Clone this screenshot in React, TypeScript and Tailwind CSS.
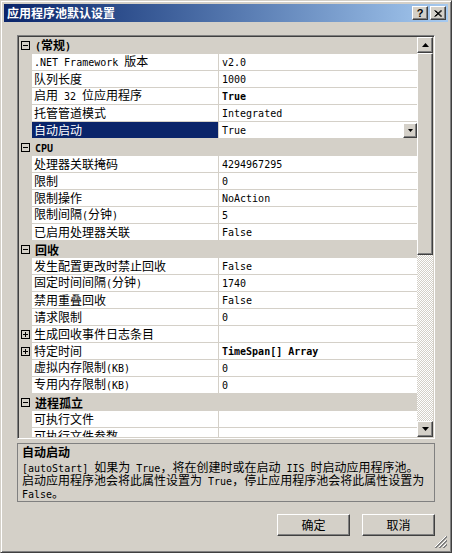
import React from 'react'

// ── data ────────────────────────────────────────────────────────────────────
type Prop = { name: string; value?: string; bold?: boolean; plus?: boolean; sel?: boolean }
type Cat = { cat: string; props: Prop[] }

const grid: Cat[] = [
  {
    cat: '(常规)',
    props: [
      { name: '.NET Framework 版本', value: 'v2.0' },
      { name: '队列长度', value: '1000' },
      { name: '启用 32 位应用程序', value: 'True', bold: true },
      { name: '托管管道模式', value: 'Integrated' },
      { name: '自动启动', value: 'True', sel: true },
    ],
  },
  {
    cat: 'CPU',
    props: [
      { name: '处理器关联掩码', value: '4294967295' },
      { name: '限制', value: '0' },
      { name: '限制操作', value: 'NoAction' },
      { name: '限制间隔(分钟)', value: '5' },
      { name: '已启用处理器关联', value: 'False' },
    ],
  },
  {
    cat: '回收',
    props: [
      { name: '发生配置更改时禁止回收', value: 'False' },
      { name: '固定时间间隔(分钟)', value: '1740' },
      { name: '禁用重叠回收', value: 'False' },
      { name: '请求限制', value: '0' },
      { name: '生成回收事件日志条目', plus: true },
      { name: '特定时间', value: 'TimeSpan[] Array', bold: true, plus: true },
      { name: '虚拟内存限制(KB)', value: '0' },
      { name: '专用内存限制(KB)', value: '0' },
    ],
  },
  {
    cat: '进程孤立',
    props: [{ name: '可执行文件' }, { name: '可执行文件参数' }],
  },
]

const raised =
  'border border-t-white border-l-white border-r-[#404040] border-b-[#404040] shadow-[inset_-1px_-1px_0_#808080] bg-[#d4d0c8]'

// latin runs get a narrow mono face, like SimSun's half-width glyphs
function Txt({ s }: { s: string }) {
  return (
    <>
      {s.split(/([\x20-\x7e]+)/).map((p, i) =>
        i % 2 === 1 ? (
          <span key={i} className="font-['DejaVu_Sans_Mono',monospace] text-[10px]">
            {p}
          </span>
        ) : (
          p
        )
      )}
    </>
  )
}

function Box({ plus }: { plus?: boolean }) {
  return (
    <svg width="9" height="9" viewBox="0 0 9 9" className="block">
      <rect x="0.5" y="0.5" width="8" height="8" fill="none" stroke="#000" />
      <path d="M2 4.5h5" stroke="#000" />
      {plus && <path d="M4.5 2v5" stroke="#000" />}
    </svg>
  )
}

function Arrow({ up, w = 7 }: { up?: boolean; w?: number }) {
  const h = Math.ceil(w / 2)
  return (
    <svg width={w} height={h} viewBox={`0 0 ${w} ${h}`} className="block">
      <path d={up ? `M0 ${h}L${w / 2} 0L${w} ${h}Z` : `M0 0L${w} 0L${w / 2} ${h}Z`} fill="#000" />
    </svg>
  )
}

// ── rows ────────────────────────────────────────────────────────────────────
function CatRow({ name }: { name: string }) {
  return (
    <div className="flex h-[17px] shrink-0 items-center bg-[#d4d0c8]">
      <div className="flex w-[13px] shrink-0 justify-center">
        <Box />
      </div>
      <span className="pl-[3px] font-bold leading-[16px] whitespace-nowrap">
        <Txt s={name} />
      </span>
    </div>
  )
}

function PropRow({ p }: { p: Prop }) {
  return (
    <div className="flex h-[17px] shrink-0">
      <div className="flex w-[13px] shrink-0 items-center justify-center bg-[#d4d0c8] pb-px">
        {p.plus && <Box plus />}
      </div>
      <div
        className={`flex w-[186px] shrink-0 items-center border-b border-[#d4d0c8] pl-[2px] whitespace-nowrap ${
          p.sel ? 'bg-[#0a246a] text-white' : 'bg-white'
        }`}
      >
        <span className="leading-[16px]">
          <Txt s={p.name} />
        </span>
      </div>
      <div className="w-px shrink-0 bg-[#d4d0c8]" />
      <div className="flex flex-1 items-center justify-between border-b border-[#d4d0c8] bg-white pl-[3px] whitespace-nowrap">
        <span className={`leading-[16px] ${p.bold ? 'font-bold' : ''}`}>
          {p.value && <Txt s={p.value} />}
        </span>
        {p.sel && (
          <div className={`flex h-[15px] w-[14px] items-center justify-center ${raised}`}>
            <Arrow w={5} />
          </div>
        )}
      </div>
    </div>
  )
}

function ScrollBar() {
  return (
    <div className="flex w-[16px] shrink-0 flex-col">
      <div className={`flex h-[16px] items-center justify-center ${raised}`}>
        <Arrow up />
      </div>
      <div className={`h-[202px] ${raised}`} />
      <div className="flex-1 bg-[image:repeating-conic-gradient(#d4d0c8_0%_25%,#ffffff_0%_50%)] bg-[length:2px_2px]" />
      <div className={`flex h-[16px] items-center justify-center ${raised}`}>
        <Arrow />
      </div>
    </div>
  )
}

// ── MAIN ────────────────────────────────────────────────────────────────────
export default function App() {
  return (
    <div className="relative h-[553px] w-[452px] border border-t-[#d4d0c8] border-l-[#d4d0c8] border-r-[#404040] border-b-[#404040] bg-[#d4d0c8] p-[3px] font-['Noto_Sans_CJK_SC',sans-serif] text-[12px] text-black shadow-[inset_1px_1px_0_#ffffff,inset_-1px_-1px_0_#808080]">
      {/* Title bar */}
      <div className="flex h-[18px] items-center justify-between bg-linear-to-r from-[#0a246a] to-[#a6caf0] pr-[2px] pl-[3px]">
        <span className="font-bold leading-[16px] text-white">应用程序池默认设置</span>
        <div className="flex gap-[2px]">
          <div className={`flex h-[14px] w-[16px] items-center justify-center ${raised}`}>
            <span className="font-['Liberation_Sans',sans-serif] text-[11px] leading-none font-bold">?</span>
          </div>
          <div className={`flex h-[14px] w-[16px] items-center justify-center ${raised}`}>
            <svg width="8" height="7" viewBox="0 0 8 7" className="block">
              <path d="M0.5 0.5L7 6.5M1.5 0.5L8 6.5M7 0.5L0.5 6.5M8 0.5L1.5 6.5" stroke="#000" strokeWidth="1" />
            </svg>
          </div>
        </div>
      </div>

      <div className="flex flex-col px-[13px] pt-[13px]">
        {/* Property grid */}
        <div className="flex h-[404px] border border-t-[#808080] border-l-[#808080] border-r-white border-b-white p-px shadow-[inset_1px_1px_0_#404040,inset_-1px_-1px_0_#d4d0c8]">
          <div className="flex flex-1 flex-col overflow-hidden">
            {grid.map((c) => (
              <React.Fragment key={c.cat}>
                <CatRow name={c.cat} />
                {c.props.map((p) => (
                  <PropRow key={p.name} p={p} />
                ))}
              </React.Fragment>
            ))}
          </div>
          <ScrollBar />
        </div>

        {/* Description */}
        <div className="mt-[4px] h-[59px] border border-[#808080] px-[4px] whitespace-nowrap">
          <div className="h-[16px] font-bold leading-[16px]">自动启动</div>
          <div className="h-[13px] leading-[13px]">
            <Txt s="[autoStart] 如果为 True，将在创建时或在启动 IIS 时启动应用程序池。" />
          </div>
          <div className="h-[13px] leading-[13px]">
            <Txt s="启动应用程序池会将此属性设置为 True，停止应用程序池会将此属性设置为" />
          </div>
          <div className="h-[13px] leading-[13px]">
            <Txt s="False。" />
          </div>
        </div>

        {/* Buttons */}
        <div className="mt-[12px] flex justify-end gap-[12px]">
          <div className={`flex h-[22px] w-[73px] items-center justify-center ${raised}`}>确定</div>
          <div className={`flex h-[22px] w-[73px] items-center justify-center ${raised}`}>取消</div>
        </div>
      </div>

      {/* size grip */}
      <svg width="12" height="12" viewBox="0 0 12 12" className="absolute right-[4px] bottom-[4px] block">
        <path d="M11 0L0 11M11 4L4 11M11 8L8 11" stroke="#ffffff" />
        <path d="M12 0L0 12M12 1L1 12M12 4L4 12M12 5L5 12M12 8L8 12M12 9L9 12" stroke="#808080" />
      </svg>
    </div>
  )
}
